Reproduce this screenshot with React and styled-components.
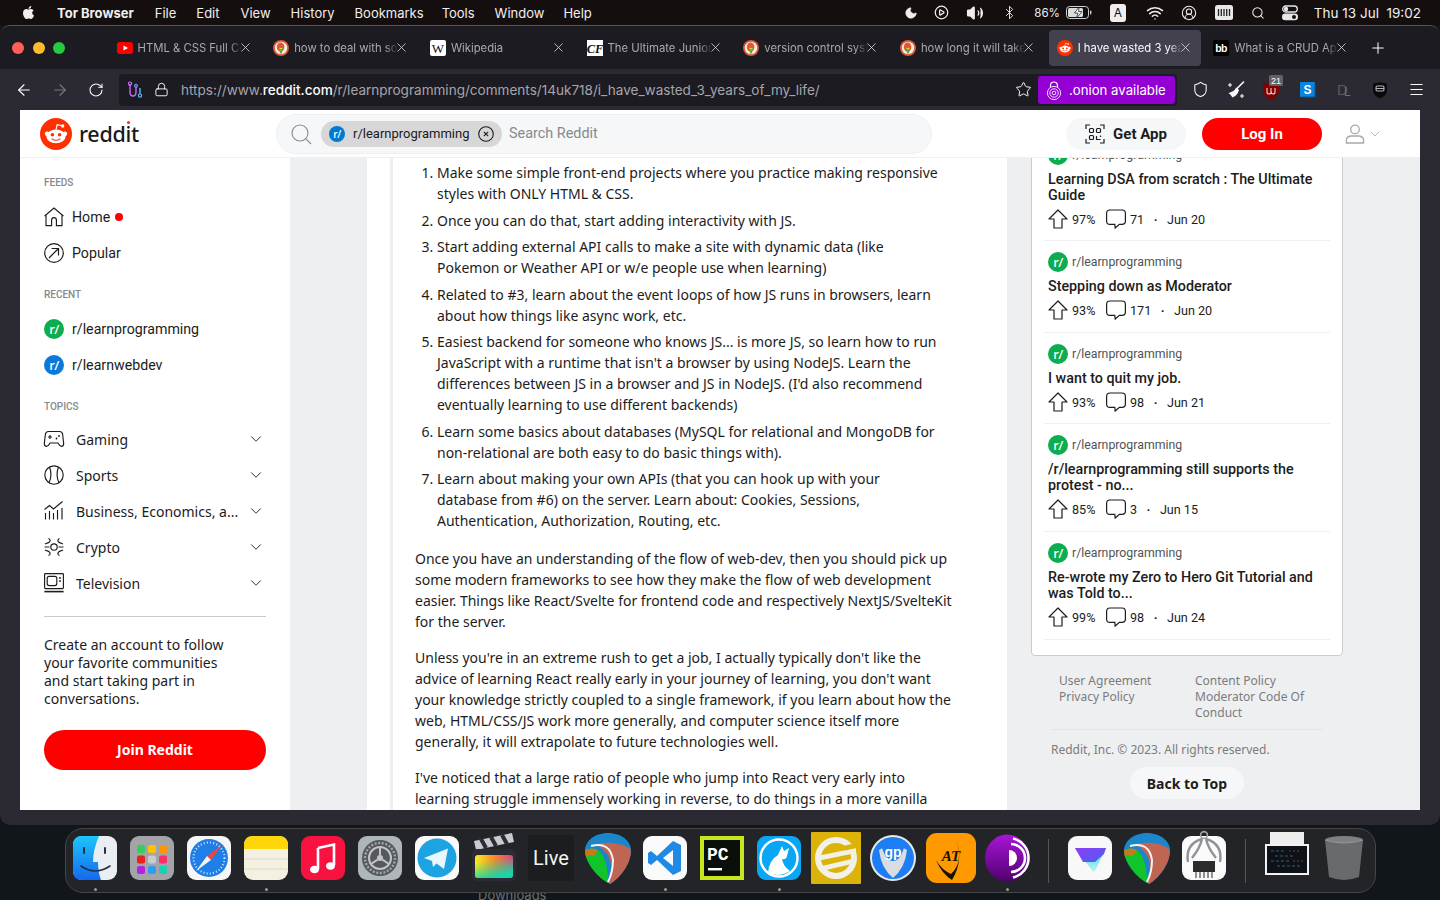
import React from "react";
import styled, { createGlobalStyle } from "styled-components";
import { FaApple } from "react-icons/fa";
import {
  ArrowLeft, ArrowRight, RotateCw, Lock, Star, Shield, Menu, Plus, X, Moon, CirclePlay, Volume2,
  Bluetooth, Wifi, Search, CircleUserRound, ChevronDown,
} from "lucide-react";

const UI = `Inter, "Liberation Sans", sans-serif`;
const NOTO = `"Noto Sans", "Liberation Sans", sans-serif`;
const PLEX = `Roboto, "Noto Sans", sans-serif`;

const Global = createGlobalStyle`
  html, body { margin: 0; padding: 0; background: #10161a; }
  * { box-sizing: border-box; }
`;

const Desktop = styled.div`
  position: relative;
  width: 1440px;
  height: 900px;
  overflow: hidden;
  display: flex;
  flex-direction: column;
  background: #10161a;
  font-family: ${UI};
`;

/* ---------- mac menu bar ---------- */
const MenuBar = styled.div`
  height: 25px;
  flex: none;
  display: flex;
  align-items: center;
  padding: 0 19px 0 21px;
  background: #140e0f;
  color: #f1eeee;
  font-size: 13px;
`;
const MenuItem = styled.span`
  margin-left: ${(p) => p.$ml}px;
  font-weight: ${(p) => (p.$bold ? 700 : 400)};
  white-space: nowrap;
`;
const StatusRow = styled.div`
  margin-left: auto;
  display: flex;
  align-items: center;
`;
const StatusItem = styled.span`
  display: inline-flex;
  align-items: center;
  margin-left: ${(p) => p.$ml}px;
  font-size: ${(p) => p.$size || 13}px;
  white-space: nowrap;
`;
const KeyTile = styled.span`
  width: 16px;
  height: 18px;
  border-radius: 3px;
  background: #efefef;
  color: #111;
  font-size: 12px;
  display: flex;
  align-items: center;
  justify-content: center;
`;

/* ---------- browser ---------- */
const Browser = styled.div`
  height: 800px;
  flex: none;
  display: flex;
  flex-direction: column;
  background: #2b2a33;
  border-radius: 10px;
  border-top: 1px solid #55555c;
  overflow: hidden;
`;
const TabStrip = styled.div`
  height: 43px;
  flex: none;
  display: flex;
  align-items: center;
  background: #1c1b22;
  padding-left: 12px;
`;
const Light = styled.span`
  width: 12px;
  height: 12px;
  border-radius: 50%;
  background: ${(p) => p.$c};
  margin-right: 8.5px;
`;
const Tabs = styled.div`
  margin-left: 35px;
  display: flex;
  gap: 4.7px;
  align-items: center;
`;
const Tab = styled.div`
  width: 152px;
  height: 36px;
  display: flex;
  align-items: center;
  padding-left: 8px;
  border-radius: 4px;
  background: ${(p) => (p.$active ? "#42414d" : "transparent")};
  color: ${(p) => (p.$active ? "#fbfbfe" : "#a9a9ae")};
  font-size: 11.3px;
`;
const TabTitle = styled.span`
  width: 104px;
  margin-left: 5px;
  overflow: hidden;
  white-space: nowrap;
  -webkit-mask-image: linear-gradient(90deg, #000 88%, transparent);
  mask-image: linear-gradient(90deg, #000 88%, transparent);
`;
const TabClose = styled.span`
  display: flex;
  color: #e8e8ea;
  margin-left: -4px;
`;
const NewTab = styled.span`
  display: flex;
  margin-left: 12px;
  color: #fbfbfe;
`;
const Toolbar = styled.div`
  height: 41px;
  flex: none;
  display: flex;
  align-items: center;
  padding: 0 6px;
  background: #2b2a33;
  color: #fbfbfe;
`;
const ToolButton = styled.span`
  width: 36px;
  height: 32px;
  flex: none;
  display: flex;
  align-items: center;
  justify-content: center;
  color: ${(p) => p.$c || "#fbfbfe"};
`;
const UrlBar = styled.div`
  margin: 0 5px;
  flex: 1;
  height: 32px;
  display: flex;
  align-items: center;
  background: #1c1b22;
  border-radius: 4px;
  padding: 0 2px 0 8px;
`;
const Url = styled.div`
  margin-left: 12px;
  flex: 1;
  font-size: 13.55px;
  color: #a5a5aa;
  white-space: nowrap;
  b { color: #fbfbfe; font-weight: 500; }
`;
const OnionButton = styled.div`
  margin-left: 6px;
  width: 137px;
  height: 28px;
  flex: none;
  border-radius: 3px;
  background: #9400d3;
  color: #fff;
  display: flex;
  align-items: center;
  gap: 6px;
  padding-left: 7px;
  font-size: 13.2px;
  white-space: nowrap;
`;
const Viewport = styled.div`
  flex: 1;
  min-height: 0;
  margin: 0 20px 15px;
  background: #fff;
  display: flex;
  flex-direction: column;
  overflow: hidden;
`;

/* ---------- reddit header ---------- */
const Header = styled.header`
  position: relative;
  z-index: 1;
  height: 48px;
  flex: none;
  display: flex;
  align-items: center;
  padding-left: 20px;
  background: #fff;
  border-bottom: 1px solid #edeff1;
`;
const Wordmark = styled.span`
  margin-left: 7px;
  width: 197px;
  flex: none;
  font-family: ${NOTO};
  font-size: 21.5px;
  font-weight: 500;
  color: #1a1a1b;
  letter-spacing: -0.3px;
  line-height: 1;
`;
const WordDot = styled.span`
  position: relative;
  &::after {
    content: "";
    position: absolute;
    left: 1.5px;
    top: 2px;
    width: 3.5px;
    height: 3.5px;
    border-radius: 50%;
    background: #ff3000;
  }
`;
const SearchBox = styled.div`
  width: 656px;
  height: 40px;
  flex: none;
  border-radius: 20px;
  background: #f6f7f8;
  border: 1px solid #edeff1;
  display: flex;
  align-items: center;
  padding-left: 14px;
  color: #878a8c;
`;
const Chip = styled.div`
  margin-left: 10px;
  width: 181px;
  height: 26px;
  border-radius: 13px;
  background: #d7d7d7;
  display: flex;
  align-items: center;
  padding-left: 8px;
  color: #1a1a1b;
  font-family: ${PLEX};
  font-size: 13px;
`;
const ChipLabel = styled.span`
  margin: 0 8px 0 8px;
  width: 117px;
  white-space: nowrap;
`;
const SearchHint = styled.span`
  margin-left: 7px;
  font-family: ${PLEX};
  font-size: 14.4px;
  color: #878a8c;
`;
const GetApp = styled.div`
  margin-left: 134px;
  width: 120px;
  height: 32px;
  border-radius: 16px;
  background: #f6f7f8;
  display: flex;
  align-items: center;
  justify-content: center;
  gap: 8px;
  color: #1c1c1c;
  font-family: ${PLEX};
  font-weight: 700;
  font-size: 15px;
`;
const LogIn = styled.div`
  margin-left: 16px;
  width: 120px;
  height: 32px;
  border-radius: 16px;
  background: #ff0000;
  color: #fff;
  display: flex;
  align-items: center;
  justify-content: center;
  font-family: ${PLEX};
  font-weight: 700;
  font-size: 15px;
`;
const UserMenu = styled.div`
  margin-left: 23px;
  display: flex;
  align-items: center;
  gap: 2px;
  color: #a8aaab;
`;

/* ---------- page ---------- */
const Body = styled.div`
  flex: 1;
  min-height: 0;
  display: flex;
`;
const Sidebar = styled.aside`
  width: 270px;
  flex: none;
  padding: 17px 24px 0;
  background: #fff;
  display: flex;
  flex-direction: column;
`;
const SideHeading = styled.div`
  height: 16px;
  margin: ${(p) => p.$mt || 0}px 0 ${(p) => p.$mb ?? 8}px;
  font-family: ${PLEX};
  font-size: 10px;
  font-weight: 500;
  line-height: 16px;
  color: #878a8c;
  text-transform: uppercase;
`;
const SideRow = styled.div`
  height: 36px;
  display: flex;
  align-items: center;
  color: #1c1c1c;
`;
const SideIcon = styled.span`
  width: 20px;
  height: 20px;
  flex: none;
  display: flex;
  align-items: center;
  justify-content: center;
`;
const SideLabel = styled.span`
  margin-left: 8px;
  font-family: ${PLEX};
  font-size: 14.2px;
  white-space: nowrap;
`;
const HomeDot = styled.span`
  width: 8px;
  height: 8px;
  margin-left: 5px;
  border-radius: 50%;
  background: #ff0000;
`;
const SubDot = styled.span`
  width: ${(p) => p.$size}px;
  height: ${(p) => p.$size}px;
  flex: none;
  border-radius: 50%;
  background: ${(p) => p.$c};
  color: #fff;
  display: flex;
  align-items: center;
  justify-content: center;
  font-family: ${NOTO};
  font-size: ${(p) => p.$size * 0.66}px;
  font-weight: 500;
  letter-spacing: -0.5px;
`;
const TopicLabel = styled.span`
  margin-left: 12px;
  width: 162px;
  flex: none;
  font-family: ${NOTO};
  font-size: 14px;
  white-space: nowrap;
`;
const TopicChevron = styled.span`
  margin-left: 9px;
  display: flex;
  color: #1c1c1c;
`;
const SideRule = styled.hr`
  margin: 15px 0 19px;
  border: 0;
  height: 1px;
  background: #c9cbcd;
`;
const Pitch = styled.p`
  margin: 0;
  width: 200px;
  font-family: ${NOTO};
  font-size: 14px;
  line-height: 18px;
  color: #1c1c1c;
`;
const JoinButton = styled.div`
  margin-top: 22px;
  height: 40px;
  padding-bottom: 1px;
  border-radius: 20px;
  background: #ff0000;
  color: #fff;
  display: flex;
  align-items: center;
  justify-content: center;
  font-family: ${NOTO};
  font-size: 14px;
  font-weight: 700;
`;
const Main = styled.main`
  flex: 1;
  min-width: 0;
  display: flex;
  gap: 24px;
  padding-left: 77px;
  background: #edeff1;
  overflow: hidden;
`;
const Post = styled.article`
  width: 640px;
  flex: none;
  background: #fff;
  padding-left: 23px;
`;
const PostText = styled.div`
  height: 100%;
  padding: 4px 50px 0 22px;
  border-left: 3px solid #edeff1;
  font-family: ${NOTO};
  font-size: 14px;
  line-height: 21px;
  color: #1c1c1c;
`;
const Steps = styled.ol`
  margin: 0 0 17px;
  padding: 0 16px 0 22px;
  li { margin-bottom: 5.5px; }
  li:last-child { margin-bottom: 0; }
`;
const Para = styled.p`
  margin: 0 0 15px;
`;
const Rail = styled.aside`
  width: 312px;
  flex: none;
`;
const RailCard = styled.div`
  margin-top: -25px;
  background: #fff;
  border: 1px solid #ccc;
  border-radius: 4px;
  padding: 0 12px 15px;
`;
const RailItem = styled.div`
  height: ${(p) => p.$h}px;
  padding: 0 4px;
  display: flex;
  flex-direction: column;
  border-bottom: 1px solid #edeff1;
`;
const RailSub = styled.div`
  display: flex;
  align-items: center;
  gap: 4px;
  height: 20px;
  margin-top: 11px;
  font-family: ${PLEX};
  font-size: 12.3px;
  color: #4f5355;
`;
const RailTitle = styled.div`
  margin-top: 6px;
  font-family: ${PLEX};
  font-size: 14.3px;
  font-weight: 500;
  line-height: 16px;
  color: #1c1c1c;
`;
const RailStats = styled.div`
  margin-top: 6px;
  height: 20px;
  display: flex;
  align-items: center;
  gap: 4px;
  font-family: ${PLEX};
  font-size: 12.6px;
  color: #1c1c1c;
`;
const Percent = styled.span`
  width: 30px;
`;
const StatDot = styled.span`
  margin: 0 5.5px;
  font-weight: 700;
`;
const LegalLinks = styled.div`
  display: grid;
  grid-template-columns: 136px 128px;
  margin: 0 20px;
  padding: 17px 0 8px 8px;
  border-bottom: 1px solid #e4e6e8;
  font-family: ${NOTO};
  font-size: 12px;
  line-height: 16px;
  color: #7c7c7c;
  & > div { display: flex; flex-direction: column; }
`;
const Copyright = styled.div`
  margin: 12px 20px 0;
  font-family: ${NOTO};
  font-size: 12px;
  line-height: 16px;
  color: #7c7c7c;
`;
const BackTop = styled.div`
  margin: 9px auto 0 99px;
  width: 114px;
  height: 32px;
  border-radius: 16px;
  background: #f6f7f8;
  color: #1c1c1c;
  display: flex;
  align-items: center;
  justify-content: center;
  font-family: ${NOTO};
  font-weight: 700;
  font-size: 14px;
`;

/* ---------- dock ---------- */
const DockArea = styled.div`
  position: relative;
  flex: 1;
  padding: 3px 64px 0 65px;
`;
const BehindDock = styled.span`
  position: absolute;
  left: 478px;
  top: 62px;
  font-size: 13px;
  color: #6c6f72;
`;
const Dock = styled.div`
  position: relative;
  height: 65px;
  padding: 0 3px 0 0.5px;
  display: flex;
  border-radius: 18px;
  border: 1px solid #444549;
  background: rgb(35, 36, 39);
`;
const DockSlot = styled.div`
  width: 57px;
  height: 100%;
  flex: none;
  display: flex;
  flex-direction: column;
  align-items: center;
  padding-top: 7px;
  position: relative;
`;
const RunDot = styled.span`
  position: absolute;
  left: 27px;
  bottom: 1px;
  width: 3px;
  height: 3px;
  border-radius: 50%;
  background: #9a9a9a;
`;
const DockDivider = styled.div`
  width: 26px;
  flex: none;
  display: flex;
  justify-content: center;
  padding: 10px 0 9px;
  &::after { content: ""; width: 1px; background: #55565a; }
`;
const IconSvg = styled.svg`
  display: block;
  overflow: visible;
  flex: none;
`;

/* ---------- drawings ---------- */
const Snoo = ({ size = 32 }) => (
  <IconSvg width={size} height={size} viewBox="0 0 32 32">
    <circle cx="16" cy="16" r="16" fill="#ff3000" />
    <circle cx="7.2" cy="15.8" r="2.4" fill="#fff" />
    <circle cx="24.8" cy="15.8" r="2.4" fill="#fff" />
    <ellipse cx="16" cy="18.4" rx="9.6" ry="6.8" fill="#fff" />
    <path d="M16 11.6 L17.2 6.6 L21.4 7.6" fill="none" stroke="#fff" strokeWidth="1.2" />
    <circle cx="22.6" cy="8" r="1.7" fill="#fff" />
    <circle cx="12.4" cy="16.8" r="1.8" fill="#ff3000" />
    <circle cx="19.6" cy="16.8" r="1.8" fill="#ff3000" />
    <path d="M12 21 Q16 23.6 20 21" fill="none" stroke="#ff3000" strokeWidth="1.1" strokeLinecap="round" />
  </IconSvg>
);
const Ddg = () => (
  <IconSvg width="16" height="16" viewBox="0 0 16 16">
    <circle cx="8" cy="8" r="8" fill="#de5833" />
    <circle cx="8" cy="8" r="6.2" fill="#f4f0ec" />
    <ellipse cx="7.6" cy="7" rx="3.8" ry="4.6" fill="#de5833" />
    <path d="M6 7.5 h4 l-1 6 h-2z" fill="#4eb14d" />
    <path d="M6 8 h4 l-2 1.4z" fill="#fdd20a" />
  </IconSvg>
);
const Favicon = ({ kind }) => {
  if (kind === "yt")
    return (
      <IconSvg width="16" height="16" viewBox="0 0 16 16">
        <rect y="2" width="16" height="12" rx="3" fill="#f00" />
        <path d="M6.5 5.4 L11 8 L6.5 10.6z" fill="#fff" />
      </IconSvg>
    );
  if (kind === "ddg") return <Ddg />;
  if (kind === "wiki")
    return (
      <IconSvg width="16" height="16" viewBox="0 0 16 16">
        <rect width="16" height="16" rx="2" fill="#fff" />
        <text x="8" y="12.5" textAnchor="middle" fontFamily="Liberation Serif" fontSize="13" fill="#111">W</text>
      </IconSvg>
    );
  if (kind === "cf")
    return (
      <IconSvg width="16" height="16" viewBox="0 0 16 16">
        <rect width="16" height="16" fill="#fff" />
        <text x="8" y="12.5" textAnchor="middle" fontFamily="Liberation Serif" fontStyle="italic" fontWeight="700" fontSize="12.5" fill="#111">CF</text>
      </IconSvg>
    );
  if (kind === "reddit") return <Snoo size={16} />;
  return (
    <IconSvg width="16" height="16" viewBox="0 0 16 16">
      <rect width="16" height="16" rx="2" fill="#000" />
      <text x="8" y="12" textAnchor="middle" fontFamily="Liberation Sans" fontWeight="700" fontSize="10.5" letterSpacing="-0.6" fill="#fff">bb</text>
    </IconSvg>
  );
};
const Battery = () => (
  <IconSvg width="26" height="13" viewBox="0 0 26 13">
    <rect x="0.5" y="0.5" width="22" height="12" rx="3.2" fill="none" stroke="#cfcfcf" />
    <rect x="2" y="2" width="15" height="9" rx="1.6" fill="#dcdcdc" />
    <path d="M13 1 L8.5 7 H12 L10.5 12 L16 5.6 H12.6z" fill="#fff" stroke="#140e0f" strokeWidth="0.7" />
    <rect x="24" y="4.5" width="1.4" height="4" rx="0.7" fill="#cfcfcf" />
  </IconSvg>
);
const MemoryIcon = () => (
  <IconSvg width="18" height="15" viewBox="0 0 18 15">
    <rect width="18" height="15" rx="2.5" fill="#e8e8e8" />
    <path d="M3.5 4 V11 M6.3 4 V11 M9 4 V11 M11.7 4 V11 M14.5 4 V11" stroke="#222" strokeWidth="1.3" />
  </IconSvg>
);
const ControlIcon = () => (
  <IconSvg width="16" height="16" viewBox="0 0 16 16">
    <rect x="0.7" y="1" width="14.6" height="6" rx="3" fill="none" stroke="#e8e8e8" strokeWidth="1.3" />
    <circle cx="4" cy="4" r="2.2" fill="#e8e8e8" />
    <rect x="0" y="8.6" width="16" height="6.6" rx="3.3" fill="#e8e8e8" />
    <circle cx="12" cy="11.9" r="2" fill="#140e0f" />
  </IconSvg>
);
const CircuitIcon = () => (
  <IconSvg width="16" height="18" viewBox="0 0 16 18">
    <path d="M3 3 V11 Q3 15 6 15 Q9 15 9 11 V6" fill="none" stroke="#c76bff" strokeWidth="1.4" />
    <path d="M13 7 V13" fill="none" stroke="#58b8ff" strokeWidth="1.4" />
    <circle cx="3" cy="2.6" r="1.6" fill="none" stroke="#c76bff" strokeWidth="1.2" />
    <circle cx="13" cy="14.6" r="1.6" fill="none" stroke="#58b8ff" strokeWidth="1.2" />
    <circle cx="9" cy="4.8" r="1.4" fill="none" stroke="#7f8cff" strokeWidth="1.2" />
  </IconSvg>
);
const OnionMark = () => (
  <IconSvg width="18" height="20" viewBox="0 0 18 20">
    <path d="M5.5 8 V5.5 a3.5 3.5 0 0 1 7 0 V8" fill="none" stroke="#fff" strokeWidth="1.2" />
    <circle cx="9" cy="13" r="6.6" fill="none" stroke="#f5ddff" strokeWidth="1" />
    <circle cx="9" cy="13" r="4.2" fill="none" stroke="#f5ddff" strokeWidth="1" />
    <circle cx="9" cy="13" r="1.8" fill="none" stroke="#f5ddff" strokeWidth="1" />
  </IconSvg>
);
const BroomIcon = () => (
  <IconSvg width="20" height="20" viewBox="0 0 20 20">
    <path d="M17.5 2 L10 9.5" stroke="#fbfbfe" strokeWidth="1.6" strokeLinecap="round" />
    <path d="M10.5 7.5 L13 10 Q11.5 15.5 6.5 17.5 Q4.5 14 2.5 13 Q7.5 12 10.5 7.5z" fill="#fbfbfe" />
    <path d="M4 3 V7 M2 5 H6 M16 14 V18 M14 16 H18" stroke="#fbfbfe" strokeWidth="1.1" />
  </IconSvg>
);
const UBlock = () => (
  <IconSvg width="18" height="20" viewBox="0 0 18 20">
    <path d="M0 3.5 Q5 3.5 8 1 Q11 3.5 16 3.5 V10 Q16 16 8 20 Q0 16 0 10z" fill="#800000" />
    <path d="M4 8 V12 Q4 14 6 14 Q8 14 8 12 V8 M8 11 Q8 14 10 14 Q12 14 12 12 V8" stroke="#e9c2c2" strokeWidth="1.2" fill="none" />
    <rect x="6" y="-5" width="14" height="11" rx="1.5" fill="#5f6368" />
    <text x="13" y="3.6" textAnchor="middle" fontFamily="Liberation Sans" fontSize="9" fill="#fff">21</text>
  </IconSvg>
);
const SkypeTile = () => (
  <IconSvg width="16" height="16" viewBox="0 0 16 16">
    <rect width="15" height="15" rx="1" fill="#0a84e0" />
    <path d="M15 2 V15 H2" fill="none" stroke="#07559a" strokeWidth="1.2" />
    <text x="7.5" y="12" textAnchor="middle" fontFamily="Liberation Sans" fontWeight="700" fontSize="12" fill="#fff">S</text>
  </IconSvg>
);
const DlMark = () => (
  <IconSvg width="18" height="18" viewBox="0 0 18 18">
    <text x="2" y="14" fontFamily="Liberation Sans" fontSize="15" fill="#5a5a60">D</text>
    <text x="9" y="15" fontFamily="Liberation Sans" fontSize="12" fill="#6e6e74">L</text>
  </IconSvg>
);
const MaskIcon = () => (
  <IconSvg width="18" height="20" viewBox="0 0 18 20">
    <path d="M1.5 3 Q9 0.5 16.5 3 V11 Q16 16 9 19 Q2 16 1.5 11z" fill="#0a0a0c" stroke="#2f2f33" />
    <rect x="5" y="6" width="8" height="5" rx="1.4" fill="none" stroke="#b8b8bc" strokeWidth="1.1" />
    <path d="M5 8.5 H13" stroke="#b8b8bc" strokeWidth="1" />
  </IconSvg>
);
const QrIcon = () => (
  <IconSvg width="20" height="20" viewBox="0 0 20 20">
    <g fill="none" stroke="#1c1c1c" strokeWidth="1.2">
      <path d="M1 5 V1 H5 M15 1 H19 V5 M19 15 V19 H15 M5 19 H1 V15" />
      <rect x="4.5" y="4.5" width="4" height="4" rx="1" />
      <rect x="11.5" y="4.5" width="4" height="4" rx="1" />
      <rect x="4.5" y="11.5" width="4" height="4" rx="1" />
      <path d="M11.5 12 V15.5 H15.5 M15.5 11.5 V13" />
    </g>
  </IconSvg>
);
const UserGlyph = () => (
  <IconSvg width="20" height="20" viewBox="0 0 20 20">
    <circle cx="10" cy="5.4" r="4.3" fill="none" stroke="#a8aaab" strokeWidth="1.3" />
    <path d="M1.4 19 V16.4 Q1.4 12.6 6 12 H14 Q18.6 12.6 18.6 16.4 V19z" fill="none" stroke="#a8aaab" strokeWidth="1.3" />
  </IconSvg>
);
const SearchGlyph = () => (
  <IconSvg width="20" height="20" viewBox="0 0 20 20">
    <circle cx="9" cy="9" r="8" fill="none" stroke="#878a8c" strokeWidth="1.1" />
    <path d="M14.8 14.8 L20 20" stroke="#878a8c" strokeWidth="1.1" />
  </IconSvg>
);
const ChipClose = () => (
  <IconSvg width="16" height="16" viewBox="0 0 16 16">
    <circle cx="8" cy="8" r="7.3" fill="none" stroke="#1c1c1c" strokeWidth="1.1" />
    <path d="M5.8 5.8 L10.2 10.2 M10.2 5.8 L5.8 10.2" stroke="#1c1c1c" strokeWidth="1.1" />
  </IconSvg>
);
const UpArrow = () => (
  <IconSvg width="20" height="20" viewBox="0 0 20 20">
    <path d="M10 1 L19 10 H14 V19 H6 V10 H1z" fill="none" stroke="#1c1c1c" strokeWidth="1.2" strokeLinejoin="round" />
  </IconSvg>
);
const Bubble = () => (
  <IconSvg width="20" height="20" viewBox="0 0 20 20">
    <path d="M4 1 H16 Q19.4 1 19.4 4.4 V12 Q19.4 15.4 16 15.4 H13.4 L9.2 19 L8.8 15.4 H4 Q0.6 15.4 0.6 12 V4.4 Q0.6 1 4 1z" fill="none" stroke="#1c1c1c" strokeWidth="1.2" />
  </IconSvg>
);
const HomeIcon = () => (
  <IconSvg width="20" height="20" viewBox="0 0 20 20">
    <path d="M0.6 9 L10 1 L19.4 9 M2 8.4 V18.6 H7.6 V13 Q7.6 10.6 10 10.6 Q12.4 10.6 12.4 13 V18.6 H18 V8.4" fill="none" stroke="#1c1c1c" strokeWidth="1.15" />
  </IconSvg>
);
const PopularIcon = () => (
  <IconSvg width="20" height="20" viewBox="0 0 20 20">
    <circle cx="10" cy="10" r="9.3" fill="none" stroke="#1c1c1c" strokeWidth="1.2" />
    <path d="M5 15 L14.5 5.5 M7.6 5.5 H14.5 V12.4" fill="none" stroke="#1c1c1c" strokeWidth="1.2" />
  </IconSvg>
);
const TopicIcon = ({ kind }) => {
  const line = { fill: "none", stroke: "#1c1c1c", strokeWidth: 1.15 };
  if (kind === "gaming")
    return (
      <IconSvg width="20" height="20" viewBox="0 0 20 20">
        <path {...line} d="M4.5 2.5 H15.5 Q18 2.5 18.6 5 L19.6 13.8 Q20 17 17.8 17.4 Q16 17.6 14.6 15 L14 14 H6 L5.4 15 Q4 17.6 2.2 17.4 Q0 17 0.4 13.8 L1.4 5 Q2 2.5 4.5 2.5z" />
        <path {...line} d="M6 6 V10 M4 8 H8" />
        <circle cx="12.5" cy="9.5" r="0.9" fill="#1c1c1c" />
        <circle cx="15" cy="7" r="0.9" fill="#1c1c1c" />
      </IconSvg>
    );
  if (kind === "sports")
    return (
      <IconSvg width="20" height="20" viewBox="0 0 20 20">
        <circle {...line} cx="10" cy="10" r="9.2" />
        <path {...line} d="M5.5 2 Q8.6 10 5 18 M14.5 2 Q11.4 10 15 18" />
      </IconSvg>
    );
  if (kind === "business")
    return (
      <IconSvg width="20" height="20" viewBox="0 0 20 20">
        <path {...line} d="M1.5 12 V18.5 M5.5 10 V18.5 M9.5 12 V18.5 M13.5 9 V18.5 M18 7 V18.5" />
        <path {...line} d="M0.5 8.5 L5.5 4.5 L9.5 8 L18.5 0.5" />
      </IconSvg>
    );
  if (kind === "crypto")
    return (
      <IconSvg width="20" height="20" viewBox="0 0 20 20">
        <circle {...line} cx="10" cy="10" r="3.2" />
        <path {...line} d="M4.5 1.5 Q7.5 3 5 5.4 L1 7 M15.5 1.5 Q12.5 3 15 5.4 L19 7 M4.5 18.5 Q7.5 17 5 14.6 L1 13 M15.5 18.5 Q12.5 17 15 14.6 L19 13 M0.5 10 H5.5 M14.5 10 H19.5" />
      </IconSvg>
    );
  return (
    <IconSvg width="20" height="20" viewBox="0 0 20 20">
      <rect {...line} x="0.6" y="0.6" width="18.8" height="15" rx="0.8" />
      <rect {...line} x="3.2" y="3.4" width="9.6" height="9.2" rx="2" />
      <circle cx="16" cy="5" r="0.9" fill="#1c1c1c" />
      <circle cx="16" cy="8" r="0.9" fill="#1c1c1c" />
      <path {...line} d="M0.4 18.6 H19.6" strokeWidth="1.6" />
    </IconSvg>
  );
};

const DockIcon = ({ kind }) => {
  const p = { width: 44, height: 44, viewBox: "0 0 44 44" };
  switch (kind) {
    case "finder":
      return (
        <IconSvg {...p}>
          <defs>
            <linearGradient id="fnd" x1="0" y1="0" x2="0" y2="1"><stop offset="0" stopColor="#1cc6fb" /><stop offset="1" stopColor="#1668ee" /></linearGradient>
          </defs>
          <rect width="44" height="44" rx="9" fill="#e9eef3" />
          <path d="M9 0 H26 Q20 14 20 26 H25 Q25 36 28 44 H9 Q0 44 0 35 V9 Q0 0 9 0z" fill="url(#fnd)" />
          <path d="M11 12 V17 M32 12 V17" stroke="#23304a" strokeWidth="2" strokeLinecap="round" />
          <path d="M8 30 Q22 40 37 30" fill="none" stroke="#23304a" strokeWidth="1.6" strokeLinecap="round" />
        </IconSvg>
      );
    case "launchpad": {
      const cols = ["#2fd158", "#ffc20a", "#ff9500", "#e8221c", "#c6ccd0", "#ff2d6a", "#b620e0", "#2a9df4", "#19d2b4"];
      return (
        <IconSvg {...p}>
          <rect width="44" height="44" rx="9" fill="#a3a4a8" />
          {cols.map((c, i) => (
            <rect key={i} x={7 + (i % 3) * 11} y={9 + Math.floor(i / 3) * 10.5} width="8" height="8" rx="2" fill={c} />
          ))}
        </IconSvg>
      );
    }
    case "safari":
      return (
        <IconSvg {...p}>
          <rect width="44" height="44" rx="9" fill="#f6f6f6" />
          <circle cx="22" cy="22" r="19" fill="#1f7fe6" />
          <circle cx="22" cy="22" r="15.5" fill="none" stroke="#d7ebff" strokeWidth="2" strokeDasharray="1 2.2" />
          <path d="M35 9 L24 24 L20 20z" fill="#f4433c" />
          <path d="M9 35 L24 24 L20 20z" fill="#f4f4f4" />
        </IconSvg>
      );
    case "notes":
      return (
        <IconSvg {...p}>
          <rect width="44" height="44" rx="9" fill="#f5f1e2" />
          <path d="M0 13 V9 Q0 0 9 0 H35 Q44 0 44 9 V13z" fill="#ffd60a" />
          <path d="M0 23 H44 M0 33 H44" stroke="#ddd8c6" />
        </IconSvg>
      );
    case "music":
      return (
        <IconSvg {...p}>
          <rect width="44" height="44" rx="9" fill="#f8123f" />
          <path d="M17 12 L33 8.5 V29 M17 12 V33" fill="none" stroke="#fff" strokeWidth="2.6" />
          <ellipse cx="13.5" cy="33.5" rx="4.5" ry="3.8" fill="#fff" />
          <ellipse cx="29.5" cy="30" rx="4.5" ry="3.8" fill="#fff" />
        </IconSvg>
      );
    case "settings":
      return (
        <IconSvg {...p}>
          <rect width="44" height="44" rx="9" fill="#aeb6ba" />
          <circle cx="22" cy="22" r="18" fill="#55585c" />
          <circle cx="22" cy="22" r="15" fill="none" stroke="#a5a8ab" strokeWidth="2.4" strokeDasharray="2 1.6" />
          <circle cx="22" cy="22" r="11" fill="none" stroke="#c2c4c6" strokeWidth="2" />
          <circle cx="22" cy="22" r="3" fill="#c2c4c6" />
          <path d="M22 11 V19 M13 28 L19.6 23.6 M31 28 L24.4 23.6" stroke="#c2c4c6" strokeWidth="2" />
        </IconSvg>
      );
    case "telegram":
      return (
        <IconSvg {...p}>
          <rect width="44" height="44" rx="9" fill="#fafafa" />
          <circle cx="22" cy="22" r="19.5" fill="#1ea3e2" />
          <path d="M9 22 L33 12.5 L29 33 L21.5 27.5 L18 31 L17 25z" fill="#eaf6fd" />
        </IconSvg>
      );
    case "fcp":
      return (
        <IconSvg {...p}>
          <defs>
            <linearGradient id="fcpA" x1="0" y1="0" x2="1" y2="0"><stop offset="0" stopColor="#f4ef1e" /><stop offset="0.5" stopColor="#fb8a2a" /><stop offset="1" stopColor="#f2307f" /></linearGradient>
            <linearGradient id="fcpB" x1="0" y1="0" x2="0.4" y2="1"><stop offset="0.3" stopColor="#1fe08a" stopOpacity="0" /><stop offset="1" stopColor="#18d6a8" /></linearGradient>
          </defs>
          <path d="M2 5 L40 -3 L42 6 L4 14z" fill="#c9c9d2" />
          <path d="M9 3 L14 12 M19 1 L24 10 M30 -1 L35 8" stroke="#2b2b33" strokeWidth="4" />
          <rect y="13" width="44" height="32" rx="5" fill="#2b2b33" />
          <rect x="3" y="19" width="38" height="23" rx="3" fill="url(#fcpA)" />
          <rect x="3" y="19" width="38" height="23" rx="3" fill="url(#fcpB)" />
        </IconSvg>
      );
    case "live":
      return (
        <IconSvg {...p}>
          <rect x="-1" y="-1" width="46" height="46" rx="2" fill="#1c1d1f" />
          <text x="22" y="29" textAnchor="middle" fontFamily="Roboto" fontSize="20" fill="#f4f4f4">Live</text>
        </IconSvg>
      );
    case "reaper":
      return (
        <IconSvg {...p}>
          <path d="M22 -3 C36 -3 45 6 45 14 C45 28 34 42 24 48 C12 42 -1 26 -1 14 C-1 6 8 -3 22 -3z" fill="#1b86c9" />
          <path d="M-1 14 Q6 11 12 14 Q22 22 22 47 C10 40 -1 26 -1 14z" fill="#12c42b" />
          <path d="M-1 14 Q6 11 12 14 L8 20 Q2 18 0 21z" fill="#c77a1a" />
          <path d="M10 8 Q34 4 45 14 C45 28 34 42 24 48 Q22 46 22 44 Q32 22 10 8z" fill="#bf6552" />
          <path d="M5 10 Q24 5 27 24 Q27 36 22 46" fill="none" stroke="#f4f4f4" strokeWidth="2" />
        </IconSvg>
      );
    case "vscode":
      return (
        <IconSvg {...p}>
          <rect width="44" height="44" rx="9" fill="#fafafa" />
          <path d="M30 5 L38 9 V35 L30 39 L14 24 L8 29 L5 27 V17 L8 15 L14 20z M30 14 L20 22 L30 30z" fill="#1f8ae6" fillRule="evenodd" />
        </IconSvg>
      );
    case "pycharm":
      return (
        <IconSvg {...p}>
          <rect width="44" height="44" fill="#c8e61e" />
          <rect x="4" y="4" width="36" height="36" fill="#0b0f0a" />
          <text x="7" y="24" fontFamily="Liberation Mono" fontWeight="700" fontSize="18" fill="#fff">PC</text>
          <rect x="8" y="32" width="14" height="2.4" fill="#fff" />
        </IconSvg>
      );
    case "wolf":
      return (
        <IconSvg {...p}>
          <rect width="44" height="44" rx="9" fill="#08a6f4" />
          <circle cx="22" cy="22" r="18.5" fill="#08a6f4" stroke="#fff" strokeWidth="2.4" />
          <path d="M11 37 Q12 24 21 19 L25 10 L27 15 L32 12 L30 20 Q29 24 25 23 Q26 30 33 35 Q22 42 11 37z" fill="#fff" />
        </IconSvg>
      );
    case "gold":
      return (
        <IconSvg {...p}>
          <rect x="-3" y="-4" width="50" height="52" rx="1" fill="#dcb308" />
          <circle cx="22" cy="22" r="21" fill="#f2f1e8" />
          <circle cx="22" cy="22" r="15" fill="#dcb308" />
          <path d="M3 20 L42 12 V17 L3 25z M8 30 L42 22 V27 L8 35z" fill="#f2f1e8" />
          <rect x="30" y="8" width="16" height="5" fill="#dcb308" transform="rotate(-12 38 10)" />
        </IconSvg>
      );
    case "gp":
      return (
        <IconSvg {...p}>
          <circle cx="22" cy="22" r="23" fill="#e9e9ea" />
          <circle cx="22" cy="22" r="21" fill="#1c7ef2" />
          <path d="M8 14 Q22 6 36 14 Q34 32 22 42 Q10 32 8 14z" fill="#d9dde2" />
          <path d="M10 8 H34 Q30 25 22 25 Q14 25 10 8z" fill="#1c7ef2" />
          <text x="22" y="21" textAnchor="middle" fontFamily="Liberation Sans" fontWeight="700" fontSize="14" fill="#fff">gp</text>
        </IconSvg>
      );
    case "at":
      return (
        <IconSvg {...p}>
          <rect x="-2" y="-3" width="50" height="50" rx="11" fill="#ff9900" />
          <path d="M8 24 Q14 38 24 44 Q36 24 28 4 Q36 26 23 38 Q14 34 8 24z" fill="#1a1305" />
          <text x="23" y="25" textAnchor="middle" fontFamily="Liberation Serif" fontStyle="italic" fontWeight="700" fontSize="15" fill="#1a1305">AT</text>
        </IconSvg>
      );
    case "tor":
      return (
        <IconSvg {...p}>
          <defs>
            <linearGradient id="torG" x1="0" y1="0" x2="0" y2="1"><stop offset="0" stopColor="#a914d8" /><stop offset="1" stopColor="#50016e" /></linearGradient>
          </defs>
          <ellipse cx="22" cy="22" rx="22" ry="23.5" fill="url(#torG)" />
          <path d="M24 14 A8 8 0 0 1 24 30z" fill="#fff" />
          <path d="M26 8 A14 14 0 0 1 26 36 M28 2.5 A20 20 0 0 1 28 41.5" fill="none" stroke="#fff" strokeWidth="2.6" />
        </IconSvg>
      );
    case "proton":
      return (
        <IconSvg {...p}>
          <defs>
            <linearGradient id="prA" x1="0" y1="0" x2="1" y2="1"><stop offset="0" stopColor="#8a3df5" /><stop offset="1" stopColor="#4d60f2" /></linearGradient>
            <linearGradient id="prB" x1="0" y1="0" x2="0" y2="1"><stop offset="0" stopColor="#3ed7e8" /><stop offset="1" stopColor="#b9f4ef" /></linearGradient>
          </defs>
          <rect width="44" height="44" rx="9" fill="#f8f8f8" />
          <path d="M7 12 H38 L28 33 Q26 38 23 33z" fill="url(#prB)" />
          <path d="M7 12 H38 L36 18 L27 26 H15z" fill="url(#prA)" />
        </IconSvg>
      );
    case "chip":
      return (
        <IconSvg {...p}>
          <rect width="44" height="44" rx="9" fill="#fafafa" />
          <circle cx="22" cy="-1" r="3.4" fill="none" stroke="#a0a4a8" strokeWidth="1.6" />
          <path d="M20 3 Q3 8 6 26 M24 3 Q41 8 38 26 M20 3 Q18 12 10 22 M24 3 Q26 12 34 22" fill="none" stroke="#8f9397" strokeWidth="2.4" />
          <rect x="11" y="25" width="22" height="11" fill="#2a2c2e" />
          <path d="M14 36 V42 M18 36 V42 M22 36 V42 M26 36 V42 M30 36 V42" stroke="#777" strokeWidth="1.6" />
        </IconSvg>
      );
    case "shot":
      return (
        <IconSvg {...p}>
          <rect x="5" y="-4" width="34" height="14" fill="#eeeeee" />
          <rect x="0" y="8" width="44" height="31" fill="#f2f2f2" />
          <rect x="2" y="10" width="40" height="27" fill="#0d1218" />
          <path d="M6 15 H20 M10 20 H30 M6 25 H24 M12 30 H36" stroke="#4a5568" strokeDasharray="3 2" />
          <path d="M24 15 H36 M28 25 H38" stroke="#7b3b3b" strokeDasharray="2 2" />
        </IconSvg>
      );
    default:
      return (
        <IconSvg {...p}>
          <ellipse cx="22" cy="4" rx="19" ry="4" fill="#7d8184" />
          <path d="M3 4 L7 41 Q22 47 37 41 L41 4 Q22 10 3 4z" fill="#676b6e" />
          <path d="M3 4 Q22 10 41 4" fill="none" stroke="#94989b" />
        </IconSvg>
      );
  }
};

/* ---------- data ---------- */
const menu = [["Tor Browser", 21, true], ["File", 21], ["Edit", 20], ["View", 21], ["History", 20], ["Bookmarks", 20], ["Tools", 18], ["Window", 20], ["Help", 19]];
const tabs = [
  ["yt", "HTML & CSS Full Course"],
  ["ddg", "how to deal with some"],
  ["wiki", "Wikipedia"],
  ["cf", "The Ultimate Junior"],
  ["ddg", "version control system"],
  ["ddg", "how long it will take"],
  ["reddit", "I have wasted 3 years"],
  ["bb", "What is a CRUD App"],
];
const topics = [
  ["gaming", "Gaming"],
  ["sports", "Sports"],
  ["business", "Business, Economics, a..."],
  ["crypto", "Crypto"],
  ["tv", "Television"],
];
const steps = [
  "Make some simple front-end projects where you practice making responsive styles with ONLY HTML & CSS.",
  "Once you can do that, start adding interactivity with JS.",
  "Start adding external API calls to make a site with dynamic data (like Pokemon or Weather API or w/e people use when learning)",
  "Related to #3, learn about the event loops of how JS runs in browsers, learn about how things like async work, etc.",
  "Easiest backend for someone who knows JS... is more JS, so learn how to run JavaScript with a runtime that isn't a browser by using NodeJS. Learn the differences between JS in a browser and JS in NodeJS. (I'd also recommend eventually learning to use different backends)",
  "Learn some basics about databases (MySQL for relational and MongoDB for non-relational are both easy to do basic things with).",
  "Learn about making your own APIs (that you can hook up with your database from #6) on the server. Learn about: Cookies, Sessions, Authentication, Authorization, Routing, etc.",
];
const paragraphs = [
  "Once you have an understanding of the flow of web-dev, then you should pick up some modern frameworks to see how they make the flow of web development easier. Things like React/Svelte for frontend code and respectively NextJS/SvelteKit for the server.",
  "Unless you're in an extreme rush to get a job, I actually typically don't like the advice of learning React really early in your journey of learning, you don't want your knowledge strictly coupled to a single framework, if you learn about how the web, HTML/CSS/JS work more generally, and computer science itself more generally, it will extrapolate to future technologies well.",
  "I've noticed that a large ratio of people who jump into React very early into learning struggle immensely working in reverse, to do things in a more vanilla way.",
];
const posts = [
  { h: 107, title: "Learning DSA from scratch : The Ultimate Guide", pct: "97%", n: "71", date: "Jun 20" },
  { h: 92, title: "Stepping down as Moderator", pct: "93%", n: "171", date: "Jun 20" },
  { h: 91, title: "I want to quit my job.", pct: "93%", n: "98", date: "Jun 21" },
  { h: 108, title: "/r/learnprogramming still supports the protest - no...", pct: "85%", n: "3", date: "Jun 15" },
  { h: 108, title: "Re-wrote my Zero to Hero Git Tutorial and was Told to...", pct: "99%", n: "98", date: "Jun 24" },
];
const dockGroups = [
  [["finder", 1], ["launchpad"], ["safari"], ["notes", 1], ["music"], ["settings"], ["telegram"], ["fcp"], ["live"], ["reaper"], ["vscode", 1], ["pycharm"], ["wolf", 1], ["gold"], ["gp"], ["at"], ["tor", 1]],
  [["proton"], ["reaper"], ["chip"]],
  [["shot"], ["trash"]],
];

export default function App() {
  return (
    <>
      <Global />
      <Desktop>
        <MenuBar>
          <FaApple size={15} />
          {menu.map(([label, ml, bold]) => (
            <MenuItem key={label} $ml={ml} $bold={bold}>{label}</MenuItem>
          ))}
          <StatusRow>
            <StatusItem $ml={0}><Moon size={14} fill="#f1eeee" strokeWidth={1} /></StatusItem>
            <StatusItem $ml={16}><CirclePlay size={15} strokeWidth={2} /></StatusItem>
            <StatusItem $ml={17}><Volume2 size={18} fill="#f1eeee" strokeWidth={1.5} /></StatusItem>
            <StatusItem $ml={18}><Bluetooth size={15} strokeWidth={1.5} /></StatusItem>
            <StatusItem $ml={17} $size={11.5}>86%</StatusItem>
            <StatusItem $ml={6}><Battery /></StatusItem>
            <StatusItem $ml={18}><KeyTile>A</KeyTile></StatusItem>
            <StatusItem $ml={20}><Wifi size={18} strokeWidth={2} /></StatusItem>
            <StatusItem $ml={17}><CircleUserRound size={16} strokeWidth={1.6} /></StatusItem>
            <StatusItem $ml={18}><MemoryIcon /></StatusItem>
            <StatusItem $ml={18}><Search size={14} strokeWidth={1.8} /></StatusItem>
            <StatusItem $ml={17}><ControlIcon /></StatusItem>
            <StatusItem $ml={16} $size={13.5}>Thu 13 Jul&nbsp;&nbsp;19:02</StatusItem>
          </StatusRow>
        </MenuBar>

        <Browser>
          <TabStrip>
            <Light $c="#ff5f57" />
            <Light $c="#febc2e" />
            <Light $c="#28c840" />
            <Tabs>
              {tabs.map(([icon, title], i) => (
                <Tab key={i} $active={icon === "reddit"}>
                  <Favicon kind={icon} />
                  <TabTitle>{title}</TabTitle>
                  <TabClose><X size={15} strokeWidth={1.2} /></TabClose>
                </Tab>
              ))}
            </Tabs>
            <NewTab><Plus size={18} strokeWidth={1.4} /></NewTab>
          </TabStrip>

          <Toolbar>
            <ToolButton><ArrowLeft size={18} strokeWidth={1.5} /></ToolButton>
            <ToolButton $c="#77767d"><ArrowRight size={18} strokeWidth={1.5} /></ToolButton>
            <ToolButton><RotateCw size={16} strokeWidth={1.6} /></ToolButton>
            <UrlBar>
              <CircuitIcon />
              <Lock size={15} strokeWidth={1.5} style={{ marginLeft: 11, flex: "none" }} />
              <Url>https://www.<b>reddit.com</b>/r/learnprogramming/comments/14uk718/i_have_wasted_3_years_of_my_life/</Url>
              <Star size={17} strokeWidth={1.4} />
              <OnionButton><OnionMark />.onion available</OnionButton>
            </UrlBar>
            <ToolButton><Shield size={17} strokeWidth={1.5} /></ToolButton>
            <ToolButton><BroomIcon /></ToolButton>
            <ToolButton><UBlock /></ToolButton>
            <ToolButton><SkypeTile /></ToolButton>
            <ToolButton><DlMark /></ToolButton>
            <ToolButton><MaskIcon /></ToolButton>
            <ToolButton><Menu size={17} strokeWidth={1.5} /></ToolButton>
          </Toolbar>

          <Viewport>
            <Header>
              <Snoo />
              <Wordmark>redd<WordDot>i</WordDot>t</Wordmark>
              <SearchBox>
                <SearchGlyph />
                <Chip>
                  <SubDot $c="#0079d3" $size={16}>r/</SubDot>
                  <ChipLabel>r/learnprogramming</ChipLabel>
                  <ChipClose />
                </Chip>
                <SearchHint>Search Reddit</SearchHint>
              </SearchBox>
              <GetApp><QrIcon />Get App</GetApp>
              <LogIn>Log In</LogIn>
              <UserMenu>
                <UserGlyph />
                <ChevronDown size={16} strokeWidth={1.2} />
              </UserMenu>
            </Header>

            <Body>
              <Sidebar>
                <SideHeading>Feeds</SideHeading>
                <SideRow>
                  <SideIcon><HomeIcon /></SideIcon>
                  <SideLabel>Home</SideLabel>
                  <HomeDot />
                </SideRow>
                <SideRow>
                  <SideIcon><PopularIcon /></SideIcon>
                  <SideLabel>Popular</SideLabel>
                </SideRow>
                <SideHeading $mt={16}>Recent</SideHeading>
                <SideRow>
                  <SideIcon><SubDot $c="#0cad50" $size={20}>r/</SubDot></SideIcon>
                  <SideLabel>r/learnprogramming</SideLabel>
                </SideRow>
                <SideRow>
                  <SideIcon><SubDot $c="#0b79d9" $size={20}>r/</SubDot></SideIcon>
                  <SideLabel>r/learnwebdev</SideLabel>
                </SideRow>
                <SideHeading $mt={16} $mb={6}>Topics</SideHeading>
                {topics.map(([icon, label]) => (
                  <SideRow key={icon}>
                    <SideIcon><TopicIcon kind={icon} /></SideIcon>
                    <TopicLabel>{label}</TopicLabel>
                    <TopicChevron><ChevronDown size={18} strokeWidth={1.2} /></TopicChevron>
                  </SideRow>
                ))}
                <SideRule />
                <Pitch>Create an account to follow your favorite communities and start taking part in conversations.</Pitch>
                <JoinButton>Join Reddit</JoinButton>
              </Sidebar>

              <Main>
                <Post>
                  <PostText>
                    <Steps>
                      {steps.map((s, i) => <li key={i}>{s}</li>)}
                    </Steps>
                    {paragraphs.map((s, i) => <Para key={i}>{s}</Para>)}
                  </PostText>
                </Post>
                <Rail>
                  <RailCard>
                    {posts.map((post) => (
                      <RailItem key={post.title} $h={post.h}>
                        <RailSub>
                          <SubDot $c="#0cad50" $size={20}>r/</SubDot>
                          r/learnprogramming
                        </RailSub>
                        <RailTitle>{post.title}</RailTitle>
                        <RailStats>
                          <UpArrow />
                          <Percent>{post.pct}</Percent>
                          <Bubble />
                          <span>{post.n}</span>
                          <StatDot>·</StatDot>
                          <span>{post.date}</span>
                        </RailStats>
                      </RailItem>
                    ))}
                  </RailCard>
                  <LegalLinks>
                    <div>
                      <span>User Agreement</span>
                      <span>Privacy Policy</span>
                    </div>
                    <div>
                      <span>Content Policy</span>
                      <span>Moderator Code Of Conduct</span>
                    </div>
                  </LegalLinks>
                  <Copyright>Reddit, Inc. © 2023. All rights reserved.</Copyright>
                  <BackTop>Back to Top</BackTop>
                </Rail>
              </Main>
            </Body>
          </Viewport>
        </Browser>

        <DockArea>
          <BehindDock>Downloads</BehindDock>
          <Dock>
            {dockGroups.map((group, g) => (
              <React.Fragment key={g}>
                {g > 0 && <DockDivider />}
                {group.map(([kind, running], i) => (
                  <DockSlot key={kind + i}>
                    <DockIcon kind={kind} />
                    {running && <RunDot />}
                  </DockSlot>
                ))}
              </React.Fragment>
            ))}
          </Dock>
        </DockArea>
      </Desktop>
    </>
  );
}
